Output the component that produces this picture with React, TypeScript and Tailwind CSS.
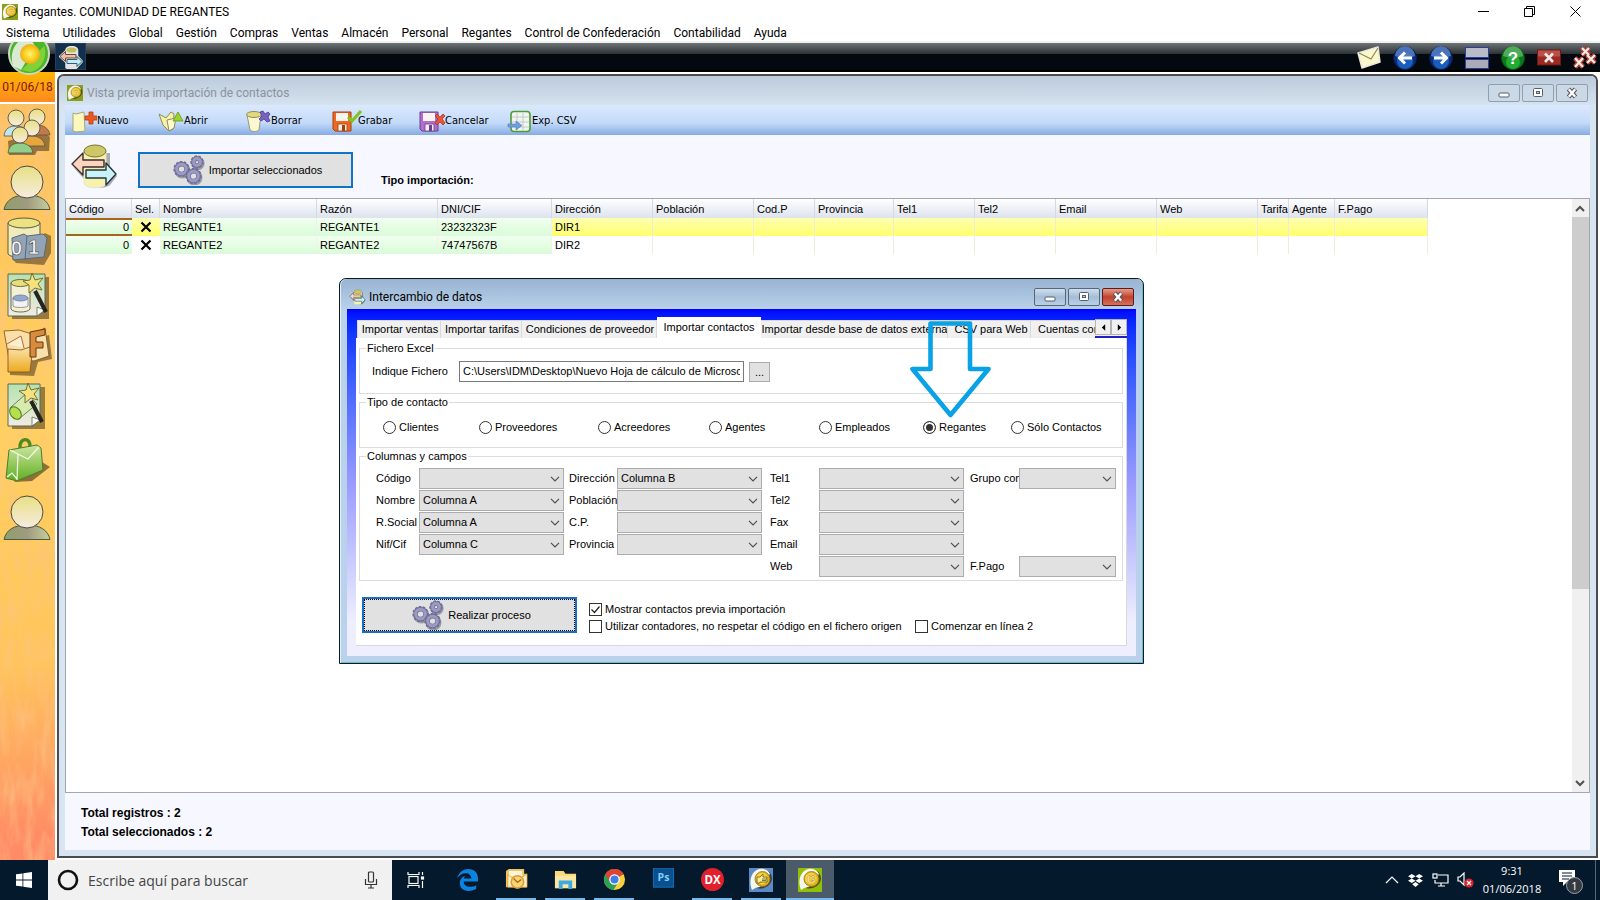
import React from "react";

const MENU = ["Sistema", "Utilidades", "Global", "Gestión", "Compras", "Ventas", "Almacén", "Personal", "Regantes", "Control de Confederación", "Contabilidad", "Ayuda"];

const COLUMNS: { label: string; width: string }[] = [
  { label: "Código", width: "w-[66px]" },
  { label: "Sel.", width: "w-[28px]" },
  { label: "Nombre", width: "w-[157px]" },
  { label: "Razón", width: "w-[121px]" },
  { label: "DNI/CIF", width: "w-[114px]" },
  { label: "Dirección", width: "w-[101px]" },
  { label: "Población", width: "w-[101px]" },
  { label: "Cod.P", width: "w-[61px]" },
  { label: "Provincia", width: "w-[79px]" },
  { label: "Tel1", width: "w-[81px]" },
  { label: "Tel2", width: "w-[81px]" },
  { label: "Email", width: "w-[101px]" },
  { label: "Web", width: "w-[101px]" },
  { label: "Tarifa", width: "w-[31px]" },
  { label: "Agente", width: "w-[46px]" },
  { label: "F.Pago", width: "w-[93px]" },
];

const ROWS = [
  { nombre: "REGANTE1", razon: "REGANTE1", dni: "23232323F", dir: "DIR1", current: true },
  { nombre: "REGANTE2", razon: "REGANTE2", dni: "74747567B", dir: "DIR2", current: false },
];

function AppIcon({ className, bg = "#86a01c", glyph = "G" }: { className: string; bg?: string; glyph?: string }) {
  return (
    <svg viewBox="0 0 24 24" className={className} aria-hidden="true">
      <rect width="24" height="24" fill={bg} />
      <path d="M8 20c6 2 14-2 15-9 0-4-2-7-4-8l-6 12z" fill="#1c1c10" opacity=".65" />
      <path d="M3 22C-1 12 3 3 10 1c5-1 9 1 11 5L11 19c-3 0-5 1-8 3z" fill="#f6f6f0" />
      <circle cx="13.500" cy="11" r="7.500" fill="#e0b01c" stroke="#9a7208" strokeWidth=".8" />
      <circle cx="13" cy="10.500" r="5.800" fill="#f5d640" />
      {glyph === "G" ? (
        <text x="13.200" y="14.500" textAnchor="middle" fontSize="11" fontWeight="700" fontFamily="Liberation Sans" fill="#fff8c8" stroke="#a87c0c" strokeWidth=".4">G</text>
      ) : (
        <path d="M8 9h3l3-3v3h4v5h-7v1H8zM13 11h5M13 12.500h4" fill="#f8ec9a" stroke="#6b5a12" strokeWidth=".8" />
      )}
    </svg>
  );
}

function ExchangeIcon({ className }: { className: string }) {
  return (
    <svg viewBox="0 0 48 46" className={className} aria-hidden="true">
      <path d="M16 10v32c4 4 20 4 24 0l7-9-7-9V10zM3 24l12 13 6 1" fill="#000" opacity=".3" />
      <path d="M14 8v33c3 5 19 5 22 0V8z" fill="#f6f2ae" stroke="#e8e4d0" strokeWidth="1" />
      <ellipse cx="25" cy="8" rx="11" ry="6" fill="#cdc765" stroke="#77743a" strokeWidth="1" />
      <path d="M2 21L13 10v7h21v7H13v8z" fill="#fcd3bf" stroke="#3a2d2a" strokeWidth="1.4" strokeLinejoin="round" />
      <path d="M46 31L36 20v7H16v8h20v7z" fill="#c9f3fb" stroke="#26343a" strokeWidth="1.4" strokeLinejoin="round" />
    </svg>
  );
}

function Gear({ cx, cy, r }: { cx: number; cy: number; r: number }) {
  return (
    <g fill="none">
      <circle cx={cx + 1} cy={cy + 1.5} r={r - 2} stroke="#4a4a55" strokeWidth="4" opacity=".45" />
      <circle cx={cx} cy={cy} r={r - 0.8} stroke="#6c6c94" strokeWidth="1.8" strokeDasharray="2.6 1.4" />
      <circle cx={cx} cy={cy} r={r - 3} stroke="#70709a" strokeWidth="4.6" />
      <circle cx={cx} cy={cy} r={r - 3.2} stroke="#9a9ac2" strokeWidth="3" />
    </g>
  );
}

function GearsIcon() {
  return (
    <svg viewBox="0 0 32 30" className="h-[30px] w-8 shrink-0" aria-hidden="true">
      <Gear cx={24} cy={7} r={6.6} />
      <Gear cx={8.5} cy={14} r={8} />
      <Gear cx={20.5} cy={21} r={8} />
    </svg>
  );
}

/* ---------- toolbar glyphs ---------- */

function NewIcon() {
  return (
    <svg viewBox="0 0 26 24" className="h-6 w-[26px]" aria-hidden="true">
      <path d="M2 4l3 1 8-2 1 19-9 1-3-1z" fill="#fbf7bd" stroke="#a9a77a" />
      <path d="M18 3h4v4h4v4h-4v4h-4v-4h-4V7h4z" fill="#ee5a1c" stroke="#b53a0c" strokeWidth=".8" />
    </svg>
  );
}
function OpenIcon() {
  return (
    <svg viewBox="0 0 26 24" className="h-6 w-[26px]" aria-hidden="true">
      <path d="M1 5l7 4 5-6 3 2-1 15-4 2L5 16z" fill="#f6f2a6" stroke="#8f8c58" />
      <path d="M11 22L9 11l9-2-2 10z" fill="#fdfbd0" stroke="#8f8c58" />
      <path d="M20 3l5 9H15z" fill="#9bd42c" stroke="#64961a" strokeWidth=".8" />
    </svg>
  );
}
function DeleteIcon() {
  return (
    <svg viewBox="0 0 26 24" className="h-6 w-[26px]" aria-hidden="true">
      <path d="M2 6l3 15c2 2 7 2 9 0l2-15z" fill="#faf8d3" stroke="#9a9872" />
      <ellipse cx="9" cy="5.5" rx="7.5" ry="3" fill="#e0da7c" stroke="#8f8c58" />
      <path d="M15 3l3-1 2 3 3-2 2 2-2 3 2 4-3 1-3-3-3 2-2-2 3-3z" fill="#7a5fc4" stroke="#4b3a94" strokeWidth=".8" />
    </svg>
  );
}
function Floppy({ main, dark, children }: { main: string; dark: string; children: React.ReactNode }) {
  return (
    <svg viewBox="0 0 26 24" className="h-6 w-[26px] overflow-visible" aria-hidden="true">
      <path d="M1 3h18v19H3l-2-2z" fill={main} stroke={dark} />
      <rect x="4" y="4" width="12" height="8" fill="#fbf3ee" />
      <rect x="6" y="15" width="9" height="7" fill="#f3efe9" stroke={dark} strokeWidth=".8" />
      <rect x="10" y="16" width="3" height="6" fill={dark} />
      {children}
    </svg>
  );
}
function SaveIcon() {
  return (
    <Floppy main="#ee6a22" dark="#a8410d">
      <path d="M16 8l4 4L29 2" fill="none" stroke="#7fc51e" strokeWidth="3" />
    </Floppy>
  );
}
function CancelIcon() {
  return (
    <Floppy main="#b06fd0" dark="#6d3f92">
      <path d="M16 7l2-2 3 3 3-3 2 2-3 3 3 4-2 2-3-3-3 3-2-2 3-4z" fill="#e8553c" stroke="#a93222" strokeWidth=".8" />
    </Floppy>
  );
}
function CsvIcon() {
  return (
    <svg viewBox="0 0 26 24" className="h-6 w-[26px]" aria-hidden="true">
      <rect x="5" y="2.500" width="19" height="20" rx="3" fill="#f1f5f1" stroke="#4f9a35" strokeWidth="1.6" />
      <path d="M6 8h17M6 13h17M6 18h17M11 4v18M17 4v18" stroke="#c3cbc6" />
      <path d="M2 15h8v-3l6 4.500-6 4.500v-3H2z" fill="#6f9fe0" stroke="#4a78b8" strokeWidth=".6" />
    </svg>
  );
}

/* ---------- side bar drawings ---------- */

function Defs() {
  return (
    <svg className="absolute h-0 w-0" aria-hidden="true">
      <defs>
        <linearGradient id="head" x1="0" y1="0" x2="0" y2="1"><stop offset="0" stopColor="#e8df84" /><stop offset="1" stopColor="#f6ecdf" /></linearGradient>
        <linearGradient id="body" x1="0" y1="0" x2="1" y2="0"><stop offset="0" stopColor="#8f9f6c" /><stop offset=".5" stopColor="#a09a80" /><stop offset="1" stopColor="#c6cf9c" /></linearGradient>
        <linearGradient id="sheet" x1="0" y1="0" x2="0" y2="1"><stop offset="0" stopColor="#b5e2b0" /><stop offset="1" stopColor="#f2ebe2" /></linearGradient>
        <linearGradient id="bag" x1="0" y1="0" x2="0" y2="1"><stop offset="0" stopColor="#cde6a0" /><stop offset="1" stopColor="#5fae22" /></linearGradient>
        <linearGradient id="fold" x1="0" y1="0" x2="0" y2="1"><stop offset="0" stopColor="#fbe6b4" /><stop offset="1" stopColor="#eda91c" /></linearGradient>
      </defs>
    </svg>
  );
}

const PersonIcon = () => (
  <g>
    <path d="M4 50.500C6 41 14 36 27 36s21 5 23 14.500z" fill="url(#body)" stroke="#4d5a42" />
    <circle cx="27" cy="23" r="16" fill="url(#head)" stroke="#4a4a44" />
  </g>
);
const Mini = ({ x, y, c }: { x: number; y: number; c: string }) => (
  <g>
    <path d={`M${x - 12} ${y + 18}c1-8 6-10 12-10s12 3 13 10z`} fill={c} stroke="#5a5048" strokeWidth=".8" />
    <circle cx={x} cy={y} r="8" fill="url(#head)" stroke="#55504a" strokeWidth=".9" />
  </g>
);
const PeopleIcon = () => (
  <g>
    <path d="M9 51h26l2-4h12l1-14-8-6-34 10z" fill="#000" opacity=".4" />
    <Mini x={37} y={13} c="#c27a4c" />
    <Mini x={16} y={14} c="#bfe6ea" />
    <Mini x={32} y={24} c="#e9a63c" />
    <Mini x={20} y={31} c="#8fcf8a" />
  </g>
);
const CalendarIcon = () => (
  <g>
    <path d="M12 44l4 5 28 2 7-12V22l-6-3z" fill="#000" opacity=".4" />
    <path d="M8 9v31c3 5 28 5 32 0V9z" fill="#f1eab9" stroke="#5d5a42" />
    <ellipse cx="24" cy="9" rx="16" ry="5" fill="#ebe282" stroke="#5d5a42" />
    <path d="M12 24l12-4 3 2 16-2 4 4-3 19-31 3z" fill="#93a3b6" stroke="#5b6878" />
    <path d="M27 22l-2 24" stroke="#5b6878" />
    <text x="11" y="41" fontSize="20" fontWeight="700" fontFamily="Liberation Sans" fill="#f7f7f7" stroke="#555" strokeWidth=".6">0</text>
    <text x="28" y="40" fontSize="20" fontWeight="700" fontFamily="Liberation Sans" fill="#f7f7f7" stroke="#555" strokeWidth=".6">1</text>
  </g>
);
const Wand = () => (
  <g>
    <path d="M33 18l13 25" stroke="#26241f" strokeWidth="4" />
    <path d="M33 18l2 4" stroke="#ddd" strokeWidth="4" />
    <path d="M32 4l3 7 8-2-5 6 4 6-7-2-6 5v-8l-6-4 7-1z" fill="#f3e37a" stroke="#6b602a" strokeWidth=".9" />
  </g>
);
const Sheet = () => (
  <g>
    <path d="M12 8h37v42H12z" fill="#000" opacity=".4" />
    <path d="M8 5h37v34l-8 8H8z" fill="url(#sheet)" stroke="#566b52" />
    <path d="M37 47v-9l8 3z" fill="#fff" stroke="#566b52" strokeWidth=".8" />
  </g>
);
const DataWandIcon = () => (
  <g>
    <Sheet />
    <path d="M11 14v26c2 4 17 4 19 0V14z" fill="#f4f0d4" stroke="#5d5a42" strokeWidth=".9" />
    <ellipse cx="20.500" cy="14" rx="9.500" ry="3.500" fill="#e6df7a" stroke="#5d5a42" strokeWidth=".9" />
    <path d="M13 29v8c2 2 13 2 15 0v-8z" fill="#f3f3f6" stroke="#66707e" strokeWidth=".7" />
    <ellipse cx="20.500" cy="29" rx="7.500" ry="3" fill="#8fa9d4" stroke="#66707e" strokeWidth=".7" />
    <Wand />
  </g>
);
const TubeWandIcon = () => (
  <g>
    <path d="M12 8h33v42H12z" fill="#000" opacity=".4" />
    <path d="M8 5h32v34l-7 8H8z" fill="url(#sheet)" stroke="#566b52" />
    <path d="M32 47v-9l8 3z" fill="#fff" stroke="#566b52" strokeWidth=".8" />
    <path d="M10 29l17-15 10 11-17 14z" fill="#d7eab0" stroke="#5d7a42" strokeWidth=".9" />
    <ellipse cx="15.500" cy="34" rx="5" ry="7" transform="rotate(-38 15.500 34)" fill="#b4e04c" stroke="#4f7a2a" />
    <g transform="translate(-4 0)"><Wand /></g>
  </g>
);
const FolderIcon = () => (
  <g>
    <path d="M10 22v29l24 1 4-14 14-3-3-24z" fill="#000" opacity=".4" />
    <path d="M4 7l15-1 13 4 13-6 4 28-15 5-13-2H9z" fill="#f9dfa8" stroke="#8a5a22" strokeWidth=".9" />
    <path d="M7 20l14-8 3 12" fill="#fdf0cf" stroke="#b0432a" strokeWidth=".8" />
    <path d="M8 25l13 1 12-4-3 26H8z" fill="url(#fold)" stroke="#8a5a22" strokeWidth=".9" />
    <path d="M30 8l15-3v6l-9 2v5h7v6h-7v9h-6z" fill="#d98a3a" stroke="#5a3a18" />
  </g>
);
const BagIcon = () => (
  <g>
    <path d="M14 48l18-1 18-14-8-5z" fill="#000" opacity=".45" />
    <path d="M20 14c-1-11 11-11 10-1" fill="none" stroke="#4f8a1c" strokeWidth="3.400" />
    <path d="M9 16l28-5 4 3 2 22-26 11-11-3z" fill="url(#bag)" stroke="#4a7a2c" />
    <path d="M10 16l18 9 11-12M17 46l1-26M7 43l5-4 5 6" fill="none" stroke="#f4fae8" strokeWidth="1.200" />
  </g>
);

const SIDE: { label: string; icon: React.ReactNode }[] = [
  { label: "Contactos", icon: <PeopleIcon /> },
  { label: "Cliente", icon: <PersonIcon /> },
  { label: "Contadores", icon: <CalendarIcon /> },
  { label: "Asistente de datos", icon: <DataWandIcon /> },
  { label: "Facturas", icon: <FolderIcon /> },
  { label: "Asistente", icon: <TubeWandIcon /> },
  { label: "Compras", icon: <BagIcon /> },
  { label: "Usuario", icon: <PersonIcon /> },
];

function PaintTexture() {
  return (
    <svg className="pointer-events-none absolute inset-0 h-full w-full" aria-hidden="true">
      <filter id="paint" x="0" y="0" width="100%" height="100%">
        <feTurbulence type="fractalNoise" baseFrequency="0.12 0.03" numOctaves="3" seed="7" />
        <feColorMatrix values="0 0 0 0 0.98  0 0 0 0 0.55  0 0 0 0 0.25  1.3 0 0 0 -0.52" />
      </filter>
      <rect width="100%" height="100%" filter="url(#paint)" />
    </svg>
  );
}

/* ---------- window buttons ---------- */

function WindowButtons({ active }: { active: boolean }) {
  const base = active
    ? "flex h-[18px] w-8 items-center justify-center rounded-[2px] border border-[#55677c] bg-gradient-to-b from-[#cfdfee] via-[#a5bdd6] to-[#b9d0e8]"
    : "flex h-[18px] w-8 items-center justify-center rounded-[2px] border border-[#8e9fb2] bg-[#cbd9e7]";
  const close = active
    ? "flex h-[18px] w-8 items-center justify-center rounded-[2px] border border-[#5a1d1a] bg-gradient-to-b from-[#e59a8a] via-[#c0412c] to-[#d5705c]"
    : base;
  return (
    <div className="flex gap-[2px]">
      <button aria-label="Minimizar" className={base}>
        <svg viewBox="0 0 14 12" className="h-3 w-[14px]"><rect x="2" y="6" width="10" height="4" rx="1" fill="#fff" stroke="#56606c" /></svg>
      </button>
      <button aria-label="Restaurar" className={base}>
        <svg viewBox="0 0 14 12" className="h-3 w-[14px]"><rect x="2.500" y="1.500" width="9" height="8" rx="1" fill="#fff" stroke="#56606c" /><rect x="5.500" y="4.500" width="3" height="2" fill="#b6c6d8" stroke="#56606c" /></svg>
      </button>
      <button aria-label="Cerrar" className={close}>
        <svg viewBox="0 0 14 12" className="h-3 w-[14px]"><path d="M3.500 2l7 8M10.500 2l-7 8" stroke="#56505c" strokeWidth="4.400" /><path d="M3.800 2.300l6.400 7.400M10.200 2.300l-6.400 7.400" stroke="#fff" strokeWidth="2.400" /></svg>
      </button>
    </div>
  );
}

/* ---------- dialog controls ---------- */

function Combo({ id, label, value }: { id: string; label: string; value?: string }) {
  return (
    <>
      <label htmlFor={id} className="overflow-hidden whitespace-nowrap leading-5">{label}</label>
      <span className="relative block h-[21px]">
        <select id={id} defaultValue={value ?? ""} className="block h-[21px] w-full appearance-none border border-[#adadad] bg-[#e1e1e1] pl-[3px] pr-5 text-[11px] text-black">
          <option value={value ?? ""}>{value ?? ""}</option>
        </select>
        <svg viewBox="0 0 10 6" className="pointer-events-none absolute right-1 top-2 h-[6px] w-[10px]" aria-hidden="true">
          <path d="M1 .8l4 4 4-4" fill="none" stroke="#505050" strokeWidth="1.200" />
        </svg>
      </span>
    </>
  );
}

function Radio({ label, checked }: { label: string; checked?: boolean }) {
  return (
    <label className="flex h-4 items-center gap-[3px] whitespace-nowrap">
      <input type="radio" name="tipo" defaultChecked={checked} className="size-[13px] shrink-0 appearance-none rounded-full border border-[#333] bg-white checked:bg-[#333] checked:shadow-[inset_0_0_0_2px_#fff]" />
      {label}
    </label>
  );
}

function Check({ label, checked }: { label: string; checked?: boolean }) {
  return (
    <label className="flex h-[17px] items-center gap-[3px] whitespace-nowrap">
      <span className="relative block size-[13px] shrink-0">
        <input type="checkbox" defaultChecked={checked} className="block size-[13px] appearance-none border border-[#333] bg-white" />
        {checked && (
          <svg viewBox="0 0 13 13" className="pointer-events-none absolute inset-0 size-[13px]" aria-hidden="true">
            <path d="M2.500 6.500l3 3 5-6" fill="none" stroke="#222" strokeWidth="1.200" />
          </svg>
        )}
      </span>
      {label}
    </label>
  );
}

const LEGEND = "ml-[6px] h-[14px] px-px leading-[14px]";
const TAB = "flex h-[18px] items-center justify-center overflow-hidden whitespace-nowrap border-r border-t border-[#d9d9d9] bg-[#f0f0f0]";

function Dialog() {
  return (
    <section aria-label="Intercambio de datos" className="absolute left-[339px] top-[278px] flex w-[805px] flex-col rounded-t-[7px] border border-[#101820] bg-[#b9d1ea] px-[7px] pb-[7px] shadow-[inset_1px_1px_0_#dff0fb,inset_-1px_-1px_0_#5fc0d8]">
      <header className="-mx-[6px] flex h-[30px] items-center rounded-t-[6px] bg-gradient-to-b from-[#98b4d2] to-[#b9d1ea] pl-2 pr-2 pt-[5px]">
        <ExchangeIcon className="h-4 w-[17px]" />
        <h2 className="ml-[3px] flex-1 pt-px font-['Roboto','Noto_Sans',sans-serif] text-[12px]">Intercambio de datos</h2>
        <WindowButtons active />
      </header>
      <div className="bg-gradient-to-b from-[#0000ff] via-[#9a9aff] via-50% to-[#eeeeff] to-90% px-[9px] pb-[10px] pt-2">
        <div role="tablist" className="flex items-end pl-px">
          <button role="tab" className={`${TAB} w-[84px] border-l pl-[2px]`}>Importar ventas</button>
          <button role="tab" className={`${TAB} w-[81px] pl-[2px]`}>Importar tarifas</button>
          <button role="tab" className={`${TAB} w-[135px] pl-[2px]`}>Condiciones de proveedor</button>
          <button role="tab" aria-selected="true" className="flex h-[21px] w-[104px] items-center justify-center whitespace-nowrap bg-white pb-px">Importar contactos</button>
          <button role="tab" className={`${TAB} w-[187px] pl-px`}>Importar desde base de datos externa</button>
          <button role="tab" className={`${TAB} w-[83px] pl-1`}>CSV para Web</button>
          <button role="tab" className="flex h-[18px] min-w-0 flex-1 items-center overflow-hidden whitespace-nowrap border-t border-[#d9d9d9] bg-[#f0f0f0] pl-[7px]">Cuentas con</button>
          <div className="flex h-[19px] items-start border-b-2 border-[#2020c0] bg-[#f0f0f0]">
            <button aria-label="Anterior" className="flex h-4 w-4 items-center justify-center border border-[#b4b4b4] bg-[#f0f0f0]"><svg viewBox="0 0 6 8" className="h-[7px] w-[5px]"><path d="M5 0v8L1 4z" /></svg></button>
            <button aria-label="Siguiente" className="flex h-4 w-4 items-center justify-center border border-[#b4b4b4] bg-[#f0f0f0]"><svg viewBox="0 0 6 8" className="h-[7px] w-[5px]"><path d="M1 0v8l4-4z" /></svg></button>
          </div>
        </div>
        <div className="flex h-[308px] flex-col gap-px border-b border-r border-[#d9d9d9] bg-white px-[3px] pt-[3px]">
          <fieldset className="h-[53px] border border-[#dcdcdc]">
            <legend className={LEGEND}>Fichero Excel</legend>
            <div className="flex items-center pl-3 pt-[6px]">
              <label htmlFor="fichero" className="w-[87px]">Indique Fichero</label>
              <input id="fichero" type="text" defaultValue="C:\Users\IDM\Desktop\Nuevo Hoja de cálculo de Microsoft Excel.xlsx" className="h-[21px] w-[285px] border border-[#7a7a7a] bg-white px-[3px] pb-px" />
              <button className="ml-[5px] h-5 w-[21px] border border-[#adadad] bg-[#e1e1e1] leading-4">...</button>
            </div>
          </fieldset>
          <fieldset className="h-[53px] border border-[#dcdcdc]">
            <legend className={LEGEND}>Tipo de contacto</legend>
            <div className="grid grid-cols-[96px_119px_111px_110px_104px_88px_auto] pl-[23px] pt-[10px]">
              <Radio label="Clientes" />
              <Radio label="Proveedores" />
              <Radio label="Acreedores" />
              <Radio label="Agentes" />
              <Radio label="Empleados" />
              <Radio label="Regantes" checked />
              <Radio label="Sólo Contactos" />
            </div>
          </fieldset>
          <fieldset className="h-[132px] border border-[#dcdcdc]">
            <legend className={LEGEND}>Columnas y campos</legend>
            <div className="flex items-start pl-4 pt-[5px]">
              <div className="grid grid-cols-[43px_145px] gap-y-px">
                <Combo id="codigo" label="Código" />
                <Combo id="nombre" label="Nombre" value="Columna A" />
                <Combo id="rsocial" label="R.Social" value="Columna A" />
                <Combo id="nif" label="Nif/Cif" value="Columna C" />
              </div>
              <div className="ml-[5px] grid grid-cols-[48px_145px] gap-y-px">
                <Combo id="direccion" label="Dirección" value="Columna B" />
                <Combo id="poblacion" label="Población" />
                <Combo id="cp" label="C.P." />
                <Combo id="provincia" label="Provincia" />
              </div>
              <div className="ml-2 grid grid-cols-[49px_145px] gap-y-px">
                <Combo id="tel1" label="Tel1" />
                <Combo id="tel2" label="Tel2" />
                <Combo id="fax" label="Fax" />
                <Combo id="email" label="Email" />
                <Combo id="web" label="Web" />
              </div>
              <div className="ml-[6px] grid grid-cols-[49px_97px] gap-y-[67px]">
                <Combo id="grupo" label="Grupo con" />
                <Combo id="fpago" label="F.Pago" />
              </div>
            </div>
          </fieldset>
          <div className="flex items-start pl-[3px] pt-[15px]">
            <button className="h-9 w-[215px] border-2 border-[#1a6fc0] bg-[#e1e1e1] p-0">
              <span className="flex h-8 items-center justify-center gap-1 border border-dotted border-black pl-1"><GearsIcon />Realizar proceso</span>
            </button>
            <div className="ml-3 pt-1">
              <Check label="Mostrar contactos previa importación" checked />
              <div className="grid grid-cols-[326px_auto]">
                <Check label="Utilizar contadores, no respetar el código en el fichero origen" />
                <Check label="Comenzar en línea 2" />
              </div>
            </div>
          </div>
        </div>
      </div>
      <svg viewBox="0 0 84 98" className="pointer-events-none absolute left-[569px] top-[41px] h-[98px] w-[84px]" aria-hidden="true">
        <path d="M21.500 3.500h39.500v45.500h18.500L41.500 95 3.500 49h18z" fill="none" stroke="#0aa2e6" strokeWidth="4.600" strokeLinejoin="round" />
      </svg>
    </section>
  );
}

/* ---------- top black bar ---------- */

function RoundArrow({ d }: { d: string }) {
  return (
    <svg viewBox="0 0 24 24" className="size-6" aria-hidden="true">
      <circle cx="12" cy="12" r="11.500" fill="#0c2c7c" stroke="#0a1a4c" />
      <circle cx="12" cy="15" r="8" fill="#1f74d8" opacity=".7" />
      <path d="M2 10a10 10 0 0120 0c-6 2-14 2-20 0z" fill="#5b86c8" opacity=".8" />
      <path d={d} fill="none" stroke="#fff" strokeWidth="3" />
    </svg>
  );
}

function TopBar() {
  return (
    <div className="flex h-[29px] shrink-0 items-center border-b-2 border-black bg-gradient-to-b from-[#6f7576] from-0% via-[#2c3136] via-[41%] to-[#04080f] to-[42%] pr-[3px]">
      <button aria-label="Inicio" className="relative z-10 h-[29px] w-[55px] overflow-visible">
        <svg viewBox="0 0 55 33" className="block h-[33px] w-[55px]" aria-hidden="true">
          <defs>
            <radialGradient id="orb"><stop offset="0" stopColor="#fff27a" /><stop offset=".6" stopColor="#fbd01c" /><stop offset="1" stopColor="#f0a81c" /></radialGradient>
          </defs>
          <circle cx="29" cy="12" r="20" fill="#4db52c" stroke="#c9dcc0" strokeWidth="2" />
          <path d="M13 24C9 10 15-2 29-6l6 10-14 24z" fill="#e9efe6" opacity=".9" />
          <path d="M22 28l22-24c4 10-2 24-14 26z" fill="#8ed83c" opacity=".8" />
          <circle cx="30" cy="12" r="10" fill="url(#orb)" />
        </svg>
      </button>
      <button aria-label="Intercambio" className="flex h-[27px] w-[31px] items-center justify-center border border-[#1d3f60] bg-[#12304c] pt-px">
        <svg viewBox="0 0 48 46" className="h-[23px] w-6" aria-hidden="true">
          <path d="M14 8c2-9 21-9 23 0v12l10 11-11 12c-3 4-19 4-22 0V33L1 21 14 9z" fill="#e4e4e0" stroke="#e4e4e0" strokeWidth="3" />
          <ellipse cx="25" cy="8" rx="10" ry="5" fill="#c5bf57" />
          <path d="M2 21L13 11v6h21v7H13v7z" fill="#f3bda4" stroke="#6a4a40" strokeWidth="2" />
          <path d="M46 31L36 21v6H16v8h20v6z" fill="#bfeefa" stroke="#3a5a68" strokeWidth="2" />
        </svg>
      </button>
      <div className="flex flex-1 justify-end gap-3 pt-[2px]">
        <button aria-label="Correo"><svg viewBox="0 0 24 24" className="size-6" aria-hidden="true"><path d="M1 7l20-6 2 15-18 6z" fill="#fbf7c9" stroke="#e8e8e0" strokeWidth="1.500" strokeLinejoin="round" /><path d="M2 7l12 6L21 2" fill="none" stroke="#8a8660" strokeWidth="1.200" /></svg></button>
        <button aria-label="Anterior"><RoundArrow d="M19 12H7M12 6.500L6.500 12l5.500 5.500" /></button>
        <button aria-label="Siguiente"><RoundArrow d="M5 12h12M12 6.500l5.500 5.500-5.500 5.500" /></button>
        <button aria-label="Mosaico"><svg viewBox="0 0 24 24" className="size-6" aria-hidden="true"><rect x=".5" y="1.500" width="23" height="10" fill="#b9bcc8" stroke="#2a3f9c" /><rect x=".5" y="13.500" width="23" height="9" fill="#a9acb8" stroke="#2a3f9c" /></svg></button>
        <button aria-label="Ayuda"><svg viewBox="0 0 24 24" className="size-6" aria-hidden="true"><circle cx="12" cy="12" r="11.500" fill="#0d7a1c" stroke="#085212" /><circle cx="12" cy="16" r="7" fill="#2fc03a" opacity=".7" /><path d="M2 10a10 10 0 0120 0c-6 2-14 2-20 0z" fill="#5fb868" opacity=".8" /><text x="12" y="18" textAnchor="middle" fontSize="17" fontWeight="700" fontFamily="Liberation Sans" fill="#fff">?</text></svg></button>
        <button aria-label="Cerrar ventana"><svg viewBox="0 0 24 24" className="size-6" aria-hidden="true"><rect x=".5" y="4" width="23" height="15" fill="#9c2a22" stroke="#6c1813" /><rect x="1" y="4.500" width="22" height="6" fill="#c45a50" opacity=".8" /><path d="M8 7.500l8 8.500M16 7.500L8 16" stroke="#e9e9e9" strokeWidth="2.600" /></svg></button>
        <button aria-label="Cerrar todas"><svg viewBox="0 0 24 24" className="size-6" aria-hidden="true"><g stroke="#b8402c" strokeWidth="5"><path d="M9 2l7 7M16 2L9 9M2 12l8 9M10 12l-8 9M14 9l8 8M22 9l-8 8" /></g><g stroke="#ececec" strokeWidth="2.200"><path d="M9 2l7 7M16 2L9 9M2 12l8 9M10 12l-8 9M14 9l8 8M22 9l-8 8" /></g></svg></button>
      </div>
    </div>
  );
}

/* ---------- preview grid ---------- */

function Grid() {
  return (
    <div className="flex min-h-0 flex-1 border border-[#a3a7b0] bg-white">
      <div className="min-w-0 flex-1 overflow-hidden">
        <table className="w-[1362px] table-fixed border-separate border-spacing-0">
          <thead>
            <tr className="h-[19px] bg-gradient-to-b from-white to-[#dde3ee]">
              {COLUMNS.map((c) => (
                <th key={c.label} scope="col" className={`${c.width} overflow-hidden whitespace-nowrap border-r border-[#d5dae2] p-0 pl-[3px] text-left font-normal leading-[18px]`}>{c.label}</th>
              ))}
            </tr>
          </thead>
          <tbody>
            {ROWS.map((r) => {
              const rest = r.current ? "bg-gradient-to-b from-[#ffffb0] to-[#ffff6a]" : "bg-white";
              const green = "border-r border-[#eef3ea] bg-gradient-to-b from-[#f2fff0] to-[#d9fbd8] p-0 pl-[3px]";
              return (
                <tr key={r.nombre} className="h-[18px] leading-[17px]">
                  <td className={r.current ? "border-y-2 border-[#a5651a] bg-gradient-to-b from-[#f2fff0] to-[#d9fbd8] p-0 pr-[3px] text-right leading-[14px]" : "bg-gradient-to-b from-[#f2fff0] to-[#d9fbd8] p-0 pr-[3px] text-right"}>0</td>
                  <td className={`${rest} p-0`}>
                    <svg viewBox="0 0 12 12" className="mx-auto size-3" role="img" aria-label="Seleccionado"><path d="M1.500 1.500l9 9M10.500 1.500l-9 9" stroke="#000" strokeWidth="2.200" /></svg>
                  </td>
                  <td className={green}>{r.nombre}</td>
                  <td className={green}>{r.razon}</td>
                  <td className={green}>{r.dni}</td>
                  <td className={`${rest} border-r border-[#ececd8] p-0 pl-[3px]`}>{r.dir}</td>
                  {COLUMNS.slice(6).map((c) => (
                    <td key={c.label} className={`${rest} border-r border-[#ececd8] p-0`} />
                  ))}
                </tr>
              );
            })}
          </tbody>
        </table>
      </div>
      <div className="flex w-[17px] flex-col bg-[#f0f0f0]" aria-hidden="true">
        <svg viewBox="0 0 17 18" className="h-[18px] w-[17px]"><path d="M4 12l4-4 4 4" fill="none" stroke="#505050" strokeWidth="2" /></svg>
        <div className="min-h-0 flex-[371] bg-[#cdcdcd]" />
        <div className="min-h-0 flex-[185]" />
        <svg viewBox="0 0 17 18" className="h-[18px] w-[17px]"><path d="M4 7l4 4 4-4" fill="none" stroke="#505050" strokeWidth="2" /></svg>
      </div>
    </div>
  );
}

const TOOLS: { label: string; icon: React.ReactNode }[] = [
  { label: "Nuevo", icon: <NewIcon /> },
  { label: "Abrir", icon: <OpenIcon /> },
  { label: "Borrar", icon: <DeleteIcon /> },
  { label: "Grabar", icon: <SaveIcon /> },
  { label: "Cancelar", icon: <CancelIcon /> },
  { label: "Exp. CSV", icon: <CsvIcon /> },
];

function PreviewWindow() {
  return (
    <section aria-label="Vista previa importación de contactos" className="flex min-w-0 flex-1 flex-col rounded-t-[7px] border-2 border-[#4b4b50] bg-[#d7e4f1] px-[6px] pb-[6px]">
      <header className="-mx-[6px] flex h-[29px] items-center rounded-t-[5px] bg-gradient-to-b from-[#bccbdb] to-[#d5e2ef] pl-2 pr-2 pt-1">
        <AppIcon className="size-4" />
        <h1 className="ml-1 flex-1 pt-px font-['Roboto','Noto_Sans',sans-serif] text-[12px] text-[#8a939e]">Vista previa importación de contactos</h1>
        <WindowButtons active={false} />
      </header>
      <div role="toolbar" className="flex h-[30px] shrink-0 items-center bg-gradient-to-b from-[#dbe9fd] via-[#c3daf9] via-60% to-[#86abe2] pl-[6px] pt-[2px] font-['DejaVu_Sans_Condensed','DejaVu_Sans',sans-serif]">
        {TOOLS.map((t) => (
          <button key={t.label} className="flex h-7 w-[87px] items-center whitespace-nowrap">
            {t.icon}
            {t.label}
          </button>
        ))}
      </div>
      <div className="flex h-[63px] shrink-0 items-start bg-[#f7f8ff] pl-[5px]">
        <ExchangeIcon className="mt-2 h-[46px] w-12" />
        <button className="ml-5 mt-[17px] flex h-9 w-[215px] items-center justify-center gap-1 border-2 border-[#0f74c8] bg-[#e1e1e1] pl-1">
          <GearsIcon />
          Importar seleccionados
        </button>
        <p className="ml-7 mt-[37px] font-bold leading-4">Tipo importación:</p>
      </div>
      <Grid />
      <footer className="h-[57px] shrink-0 bg-[#f7f8ff] pl-4 pt-[11px] text-[12px] font-bold leading-[19px]">
        <p>Total registros : 2</p>
        <p>Total seleccionados : 2</p>
      </footer>
    </section>
  );
}

/* ---------- task bar ---------- */

const TASKS: { label: string; line: string; icon: React.ReactNode }[] = [
  {
    label: "Edge", line: "border-transparent",
    icon: <path d="M1 11C3 4 8 1 13 1c6 0 10 4 10 10v3H8c0 6 8 7 13 4v4c-8 4-17 2-17-6 0-4 2-7 6-8-2 2-2 3-2 3h8c0-7-10-8-15 0z" fill="#0a84e0" />,
  },
  {
    label: "Outlook", line: "border-[#76b9ed]",
    icon: <g><path d="M1 3l3-2h16v5h3v14H1z" fill="#f3c05a" /><path d="M4 3h14v6H4z" fill="#fff4dc" /><path d="M3 7l10 7 10-8v14H3z" fill="#fdf0d0" stroke="#d79a2a" strokeWidth=".7" /><circle cx="13" cy="14.500" r="6.500" fill="#fbd37a" stroke="#d9a02c" strokeWidth="1.600" /><path d="M9 11l4 4 4-3" fill="none" stroke="#a86c10" strokeWidth="1.400" /></g>,
  },
  {
    label: "Explorador", line: "border-[#76b9ed]",
    icon: <g><path d="M1 3h9l2 3h11v15H1z" fill="#f9d978" /><path d="M1 8h22v13H1z" fill="#fbe7a4" /><path d="M5 22v-9h14v9h-4v-5H9v5z" fill="#3fa9e4" /></g>,
  },
  {
    label: "Chrome", line: "border-[#76b9ed]",
    icon: <g><circle cx="12" cy="12" r="11" fill="#f8cf3c" /><path d="M12 12L2.500 6.500A11 11 0 0121.500 6.500z" fill="#dc4436" /><path d="M2.500 6.500A11 11 0 0011 23l5.500-9L12 12z" fill="#2f9e55" /><path d="M12 6.500h9.500a11 11 0 00-19 0L7 14z" fill="#dc4436" /><circle cx="12" cy="12" r="5.500" fill="#fff" /><circle cx="12" cy="12" r="4.200" fill="#3f7fe6" /></g>,
  },
  {
    label: "Photoshop", line: "border-transparent",
    icon: <g><rect x="1.500" y="0" width="21" height="20" fill="#0b4f8f" stroke="#1173bd" /><text x="12" y="14" textAnchor="middle" fontSize="11" fontWeight="700" fontFamily="Open Sans" fill="#7fd0fa">Ps</text></g>,
  },
  {
    label: "DX", line: "border-[#76b9ed]",
    icon: <g><circle cx="12" cy="12" r="12" fill="#e0202c" /><text x="12" y="16.500" textAnchor="middle" fontSize="12" fontWeight="700" fontFamily="Open Sans" fill="#fff">DX</text></g>,
  },
];

function TaskBar() {
  return (
    <footer className="flex h-10 shrink-0 items-stretch bg-[#04192c] font-['Open_Sans','Noto_Sans',sans-serif] text-white">
      <button aria-label="Inicio de Windows" className="flex w-12 items-center justify-center">
        <svg viewBox="0 0 16 16" className="size-4"><path d="M0 2.300L6.500 1.400v6.200H0zM7.300 1.300L16 0v7.600H7.300zM0 8.400h6.500v6.200L0 13.700zM7.300 8.400H16V16l-8.700-1.300z" fill="#fff" /></svg>
      </button>
      <label className="flex w-[344px] items-center bg-[#f1f1f1] pl-[9px] pr-[14px]">
        <svg viewBox="0 0 22 22" className="size-[22px]" aria-hidden="true"><circle cx="11" cy="11" r="9" fill="none" stroke="#111" strokeWidth="2.600" /></svg>
        <input type="text" aria-label="Buscar" placeholder="Escribe aquí para buscar" className="ml-[9px] min-w-0 flex-1 bg-transparent text-[14px] placeholder:text-[#444]" />
        <svg viewBox="0 0 14 18" className="h-[18px] w-[14px]" aria-hidden="true"><rect x="4.500" y="1" width="5" height="10" rx="1" fill="none" stroke="#333" strokeWidth="1.200" /><path d="M1.500 8v5.500h11V8M7 13.500V17M4 17h6" fill="none" stroke="#333" strokeWidth="1.200" /></svg>
      </label>
      <button aria-label="Vista de tareas" className="flex w-[47px] items-center justify-center">
        <svg viewBox="0 0 18 16" className="h-4 w-[18px]" fill="none" stroke="#fff" strokeWidth="1.200"><rect x="2" y="4.500" width="9" height="7" /><path d="M1 0v2.500h11V0M1 16v-2.500h11V16M15.500 0v3M15.500 9v7" /><rect x="14.500" y="5" width="2" height="2" fill="#fff" /></svg>
      </button>
      <nav aria-label="Aplicaciones" className="flex gap-[9px] pl-2">
        {TASKS.map((t) => (
          <button key={t.label} aria-label={t.label} className={`${t.line} flex w-10 items-center justify-center border-b-2 pt-px`}>
            <svg viewBox="0 0 24 24" className="size-[23px]">{t.icon}</svg>
          </button>
        ))}
        <button aria-label="Aplicación" className="flex w-10 items-center justify-center border-b-2 border-[#76b9ed] pt-px">
          <AppIcon className="size-6" bg="#5b8ac4" glyph="hand" />
        </button>
      </nav>
      <button aria-label="Regantes" className="ml-[5px] flex w-12 items-center justify-center border-b-2 border-[#76b9ed] bg-[#4b5b69] pt-px">
        <AppIcon className="size-6" bg="#93bf0a" />
      </button>
      <div className="flex flex-1 items-center justify-end">
        <svg viewBox="0 0 14 8" className="mr-[9px] h-2 w-[14px]"><path d="M1 7l6-6 6 6" fill="none" stroke="#fff" strokeWidth="1.200" /></svg>
        <svg viewBox="0 0 15 13" className="mr-[9px] h-[13px] w-[15px]" fill="#fff"><path d="M3.800 0l3.700 2.200L3.800 4.400 0 2.200zM11.200 0L15 2.200l-3.800 2.200-3.700-2.200zM3.800 4.600l3.700 2.200L3.800 9 0 6.800zM11.200 4.600L15 6.800 11.200 9 7.500 6.800zM7.500 8l3.300 2.200L7.500 13l-3.300-2.800z" /></svg>
        <svg viewBox="0 0 17 14" className="mr-2 h-[14px] w-[17px]" fill="none" stroke="#fff" strokeWidth="1.200"><path d="M6 2h10v8H3V7M9 10v3M6 13h7" /><rect x="1" y="1" width="4" height="4" /></svg>
        <svg viewBox="0 0 17 16" className="mr-2 h-4 w-[17px]"><path d="M1 5h2l4-4v12L3 9H1z" fill="none" stroke="#fff" strokeWidth="1.200" /><circle cx="12" cy="11" r="4.600" fill="#d9222c" /><path d="M10 9l4 4M14 9l-4 4" stroke="#fff" strokeWidth="1.200" /></svg>
        <div className="w-[60px] text-center text-[11px] leading-[18px]"><p>9:31</p><p>01/06/2018</p></div>
        <svg viewBox="0 0 26 26" className="ml-4 mt-1 h-[26px] w-[26px]"><path d="M1 1h16v12H9l-4 4v-4H1z" fill="#fff" /><path d="M4 4h10M4 7h10M4 10h7" stroke="#04192c" strokeWidth="1.200" /><circle cx="16.500" cy="16.500" r="8" fill="#333a40" stroke="#9aa0a6" /><text x="16.500" y="20.500" textAnchor="middle" fontSize="11" fontFamily="Open Sans" fill="#fff">1</text></svg>
        <span className="ml-[11px] h-10 w-[5px] border-l border-[#5b6873]" />
      </div>
    </footer>
  );
}

export default function App() {
  return (
    <div className="relative flex min-h-screen w-full flex-col bg-[#f0f0f0] font-['Liberation_Sans',Arial,sans-serif] text-[11px] text-black">
      <Defs />
      <header className="flex h-[22px] shrink-0 items-center bg-white pl-[2px] pr-[2px] pt-px font-['Roboto','Noto_Sans',sans-serif] text-[12px]">
        <AppIcon className="size-4" />
        <span className="ml-[5px] flex-1">Regantes. COMUNIDAD DE REGANTES</span>
        <button aria-label="Minimizar" className="flex w-[45px] justify-center"><svg viewBox="0 0 11 11" className="size-[11px]"><path d="M0 5.500h11" stroke="#000" /></svg></button>
        <button aria-label="Restaurar" className="flex w-[46px] justify-center"><svg viewBox="0 0 11 11" className="size-[11px]" fill="none" stroke="#000"><path d="M.5 2.500h8v8h-8zM2.500 2V.5h8v8H9" /></svg></button>
        <button aria-label="Cerrar" className="flex w-[46px] justify-center"><svg viewBox="0 0 11 11" className="size-[11px]"><path d="M.5.5l10 10M10.500.5l-10 10" stroke="#000" /></svg></button>
      </header>
      <nav className="flex h-[21px] shrink-0 items-center gap-[13px] whitespace-nowrap border-b-2 border-[#eff0f0] bg-white pl-[6px] pt-[2px] font-['Roboto','Noto_Sans',sans-serif] text-[12px]">
        {MENU.map((m) => (
          <button key={m}>{m}</button>
        ))}
      </nav>
      <TopBar />
      <main className="flex min-h-0 flex-1">
        <aside className="relative flex w-[55px] shrink-0 flex-col bg-[linear-gradient(172deg,#fdbf5c_0%,#ffd060_45%,#ffc45c_75%,#ff8c66_97%)]">
          <PaintTexture />
          <div className="relative flex h-[30px] items-center justify-center bg-gradient-to-b from-[#ffb400] to-[#ff8a1c] font-['Roboto','Noto_Sans',sans-serif] text-[12px] text-[#7c1a00]">01/06/18</div>
          <div className="relative h-[2px] bg-white" />
          {SIDE.map((s) => (
            <button key={s.label} aria-label={s.label} className="relative h-[55px] w-[55px]">
              <svg viewBox="0 0 55 55" className="block size-[55px]">{s.icon}</svg>
            </button>
          ))}
        </aside>
        <div className="flex min-w-0 flex-1 bg-white p-[2px]">
          <PreviewWindow />
        </div>
      </main>
      <TaskBar />
      <Dialog />
    </div>
  );
}
